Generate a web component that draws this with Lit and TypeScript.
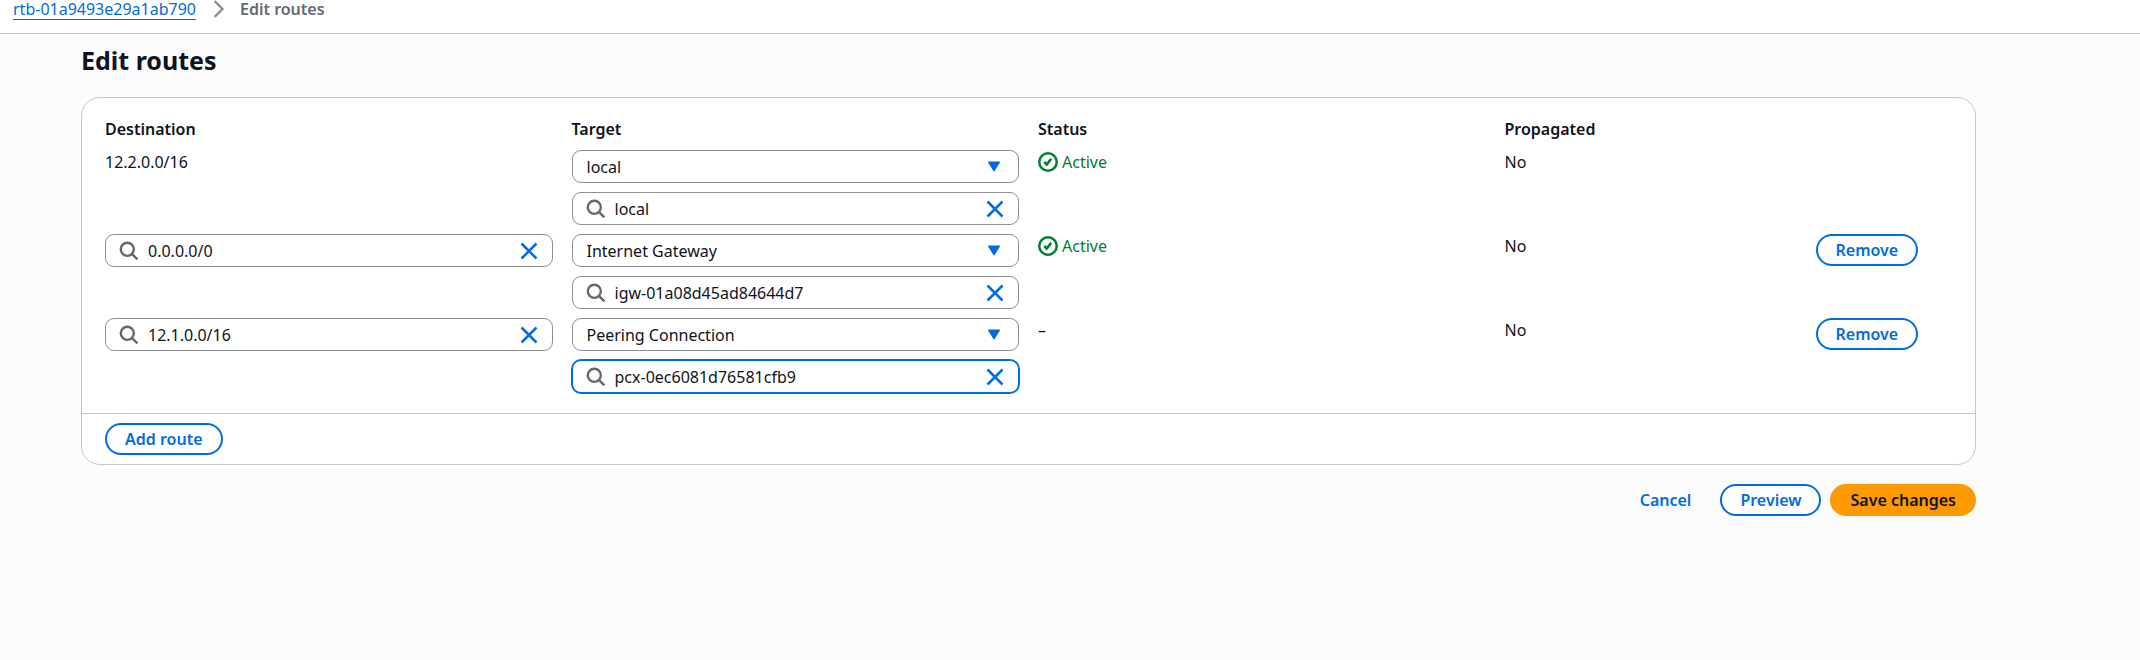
import { LitElement, html, css, svg, nothing } from "lit";
import { customElement, property, state } from "lit/decorators.js";
import { classMap } from "lit/directives/class-map.js";

interface Route {
  id: number;
  destination: string;
  fixed: boolean;
  targetType: string;
  target: string;
  active: boolean;
}

const TARGET_TYPES = ["local", "Internet Gateway", "Peering Connection", "NAT Gateway", "Transit Gateway"];

const cross = svg`<path d="m2 2 12 12M14 2 2 14" fill="none" stroke="currentColor" stroke-width="2"></path>`;
const lens = svg`<circle cx="7" cy="7" r="5.5" fill="none" stroke="currentColor" stroke-width="2"></circle><path d="m11 11 4.5 4.5" fill="none" stroke="currentColor" stroke-width="2"></path>`;
const tick = svg`<circle cx="8" cy="8" r="7" fill="none" stroke="currentColor" stroke-width="2"></circle><path d="m5 8 2 2 3.5-4.5" fill="none" stroke="currentColor" stroke-width="2"></path>`;

@customElement("search-field")
export class SearchField extends LitElement {
  @property() value = "";
  @property() label = "";
  @property({ type: Boolean }) highlighted = false;

  static styles = css`
    :host {
      display: block;
    }
    .box {
      display: flex;
      align-items: center;
      box-sizing: border-box;
      height: 33px;
      padding: 0 13px;
      border: 1px solid #8c8c94;
      border-radius: 9px;
      background: #fff;
    }
    .box.highlighted {
      border-color: #006ce0;
      box-shadow: 0 0 0 1px #006ce0;
    }
    .lens {
      flex: none;
      width: 19px;
      height: 19px;
      color: #656871;
    }
    .input {
      flex: 1;
      min-width: 0;
      padding: 0 10px;
      border: 0;
      outline: 0;
      background: none;
      font: inherit;
      color: #0f141a;
    }
    .clear {
      display: flex;
      flex: none;
      padding: 0;
      border: 0;
      background: none;
      color: #006ce0;
      cursor: pointer;
    }
    .cross {
      width: 20px;
      height: 20px;
    }
  `;

  private onInput(e: Event) {
    this.value = (e.target as HTMLInputElement).value;
  }

  render() {
    return html`
      <div class=${classMap({ box: true, highlighted: this.highlighted })}>
        <svg class="lens" viewBox="0 0 16 16" aria-hidden="true">${lens}</svg>
        <input class="input" type="text" aria-label=${this.label} .value=${this.value} @input=${this.onInput} />
        <button class="clear" type="button" aria-label="Clear" @click=${() => (this.value = "")}>
          <svg class="cross" viewBox="0 0 16 16" aria-hidden="true">${cross}</svg>
        </button>
      </div>
    `;
  }
}

@customElement("app-root")
export class AppRoot extends LitElement {
  @state() private routes: Route[] = [
    { id: 1, destination: "12.2.0.0/16", fixed: true, targetType: "local", target: "local", active: true },
    { id: 2, destination: "0.0.0.0/0", fixed: false, targetType: "Internet Gateway", target: "igw-01a08d45ad84644d7", active: true },
    { id: 3, destination: "12.1.0.0/16", fixed: false, targetType: "Peering Connection", target: "pcx-0ec6081d76581cfb9", active: false },
  ];

  static styles = css`
    :host {
      display: block;
      min-height: 100vh;
      background: #fcfcfd;
      color: #0f141a;
      font: 16px/22px "Noto Sans", "Open Sans", sans-serif;
    }
    .crumbs {
      border-bottom: 1px solid #c6c6cd;
      background: #fff;
    }
    .trail {
      display: flex;
      align-items: center;
      gap: 15px;
      height: 33px;
      margin: 0;
      padding: 0 13px 15px;
      box-sizing: border-box;
      list-style: none;
    }
    .crumb {
      display: flex;
    }
    .link {
      border-bottom: 1px solid #006ce0;
      color: #006ce0;
      line-height: 20px;
      text-decoration: none;
    }
    .chevron {
      width: 14px;
      height: 18px;
      color: #8c8c94;
    }
    .current {
      color: #656871;
      font-weight: 600;
    }
    .page {
      padding: 11px 164px 0 81px;
    }
    .title {
      margin: 0 0 22px;
      font-size: 25px;
      font-weight: 700;
      line-height: 30px;
    }
    .card {
      border: 1px solid #c6c6cd;
      border-radius: 19px;
      background: #fff;
    }
    .routes {
      display: grid;
      gap: 10px;
      padding: 20px 23px;
    }
    .group {
      display: grid;
      gap: 9px;
      line-height: 24px;
    }
    .row {
      display: grid;
      grid-template-columns: repeat(12, 1fr);
      column-gap: 19px;
    }
    .wide,
    .mid,
    .slim {
      padding: 0;
      min-width: 0;
      font-weight: inherit;
      text-align: left;
    }
    .head {
      font-weight: 600;
      line-height: 22px;
    }
    .wide {
      grid-column: span 3;
    }
    .mid {
      grid-column: span 2;
    }
    .target {
      display: grid;
      gap: 9px;
    }
    .picker {
      display: grid;
      align-items: center;
    }
    .select {
      grid-area: 1 / 1;
      width: 100%;
      height: 33px;
      padding: 0 40px 0 14px;
      border: 1px solid #8c8c94;
      border-radius: 9px;
      appearance: none;
      background: #fff;
      color: inherit;
      font: inherit;
    }
    .caret {
      grid-area: 1 / 1;
      justify-self: end;
      width: 14px;
      height: 11px;
      margin-right: 18px;
      color: #006ce0;
      pointer-events: none;
    }
    .status {
      display: flex;
      align-items: center;
      gap: 4px;
      color: #00802f;
    }
    .tick {
      width: 20px;
      height: 20px;
    }
    .button {
      height: 32px;
      padding: 0 18px;
      border: 2px solid #006ce0;
      border-radius: 16px;
      background: #fff;
      color: #006ce0;
      font: inherit;
      font-weight: 600;
      line-height: 22px;
      white-space: nowrap;
      cursor: pointer;
    }
    .button.plain {
      border-color: transparent;
      background: none;
    }
    .button.primary {
      border-color: #ff9900;
      background: #ff9900;
      color: #0f141a;
    }
    .footer {
      display: flex;
      padding: 9px 23px;
      border-top: 1px solid #c6c6cd;
    }
    .actions {
      display: flex;
      justify-content: flex-end;
      gap: 9px;
      padding: 19px 0;
    }
  `;

  private remove(id: number) {
    this.routes = this.routes.filter((r) => r.id !== id);
  }

  private add() {
    const id = Math.max(0, ...this.routes.map((r) => r.id)) + 1;
    this.routes = [...this.routes, { id, destination: "", fixed: false, targetType: "local", target: "", active: false }];
  }

  private renderRow(r: Route) {
    return html`
      <tr class="row" role="row">
        <td class="wide" role="cell">
          ${r.fixed ? r.destination : html`<search-field label="Destination" .value=${r.destination}></search-field>`}
        </td>
        <td class="wide target" role="cell">
          <div class="picker">
            <select class="select" aria-label="Target type">
              ${TARGET_TYPES.map((t) => html`<option ?selected=${t === r.targetType}>${t}</option>`)}
            </select>
            <svg class="caret" viewBox="0 0 12 10" aria-hidden="true">
              <path d="M1 1h10L6 9z" fill="currentColor" stroke="currentColor" stroke-linejoin="round"></path>
            </svg>
          </div>
          <search-field label="Target" .value=${r.target} ?highlighted=${r.id === 3}></search-field>
        </td>
        <td class="wide" role="cell">
          ${r.active
            ? html`<span class="status"><svg class="tick" viewBox="0 0 16 16" aria-hidden="true">${tick}</svg>Active</span>`
            : "–"}
        </td>
        <td class="mid" role="cell">No</td>
        <td class="slim" role="cell">
          ${r.fixed ? nothing : html`<button class="button" type="button" @click=${() => this.remove(r.id)}>Remove</button>`}
        </td>
      </tr>
    `;
  }

  render() {
    return html`
      <nav class="crumbs" aria-label="Breadcrumbs">
        <ol class="trail">
          <li class="crumb"><a class="link" href="#">rtb-01a9493e29a1ab790</a></li>
          <li class="crumb" aria-hidden="true">
            <svg class="chevron" viewBox="0 0 12 16"><path d="m3 1 7 7-7 7" fill="none" stroke="currentColor" stroke-width="2"></path></svg>
          </li>
          <li class="crumb current" aria-current="page">Edit routes</li>
        </ol>
      </nav>
      <main class="page">
        <h1 class="title">Edit routes</h1>
        <section class="card">
          <table class="routes" role="table">
            <thead class="group head" role="rowgroup">
              <tr class="row" role="row">
                <th class="wide" role="columnheader">Destination</th>
                <th class="wide" role="columnheader">Target</th>
                <th class="wide" role="columnheader">Status</th>
                <th class="mid" role="columnheader">Propagated</th>
              </tr>
            </thead>
            <tbody class="group" role="rowgroup">
              ${this.routes.map((r) => this.renderRow(r))}
            </tbody>
          </table>
          <div class="footer"><button class="button" type="button" @click=${this.add}>Add route</button></div>
        </section>
        <div class="actions">
          <button class="button plain" type="button">Cancel</button>
          <button class="button" type="button">Preview</button>
          <button class="button primary" type="button">Save changes</button>
        </div>
      </main>
    `;
  }
}
